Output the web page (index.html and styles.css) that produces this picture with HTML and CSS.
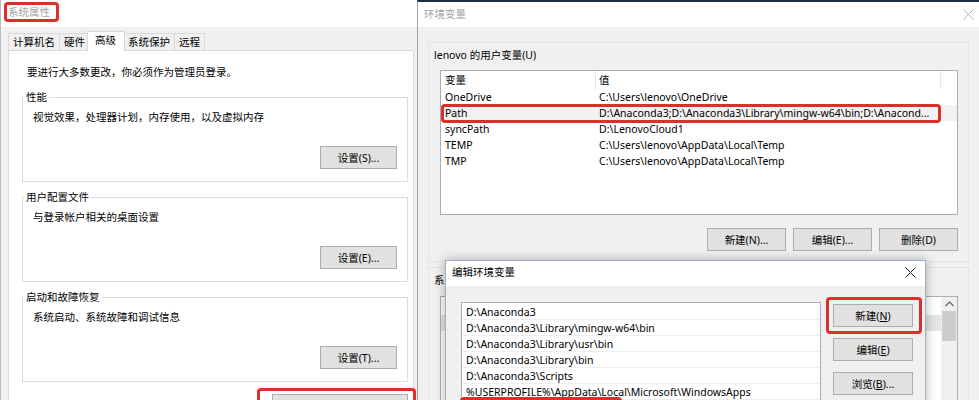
FILE: index.html
```html
<!DOCTYPE html>
<html lang="zh-CN">
<head>
    <meta charset="UTF-8">
    <meta name="viewport" content="width=device-width, initial-scale=1.0">
    <title>系统属性 - 环境变量</title>
    <link rel="stylesheet" href="styles.css">
</head>
<body>
    <div class="desktop">

        <!-- 系统属性 -->
        <div class="window sysprop">
            <div class="titlebar"><span class="title">系统属性</span></div>
            <div class="tabs">
                <div class="tab">计算机名</div>
                <div class="tab">硬件</div>
                <div class="tab active">高级</div>
                <div class="tab">系统保护</div>
                <div class="tab">远程</div>
            </div>
            <div class="tab-panel">
                <p class="intro">要进行大多数更改，你必须作为管理员登录。</p>
                <div class="group">
                    <div class="group-label">性能</div>
                    <p class="group-text">视觉效果，处理器计划，内存使用，以及虚拟内存</p>
                    <div class="group-actions"><button class="btn">设置(S)...</button></div>
                </div>
                <div class="group">
                    <div class="group-label">用户配置文件</div>
                    <p class="group-text">与登录帐户相关的桌面设置</p>
                    <div class="group-actions"><button class="btn">设置(E)...</button></div>
                </div>
                <div class="group">
                    <div class="group-label">启动和故障恢复</div>
                    <p class="group-text">系统启动、系统故障和调试信息</p>
                    <div class="group-actions"><button class="btn">设置(T)...</button></div>
                </div>
                <!-- 环境变量按钮只露出上沿 -->
                <div class="panel-actions"><button class="btn wide"></button></div>
            </div>
            <div class="mark mark-title"></div>
            <div class="mark mark-envbtn"></div>
        </div>

        <!-- 环境变量 -->
        <div class="window envvars">
            <div class="titlebar">
                <span class="title">环境变量</span>
                <span class="close inactive">
                    <svg width="11" height="11" viewBox="0 0 11 11"><path d="M0.5 0.5L10.5 10.5M10.5 0.5L0.5 10.5" stroke="currentColor" stroke-width="1"/></svg>
                </span>
            </div>
            <div class="env-body">
                <div class="env-group">
                    <div class="env-label">lenovo 的用户变量(U)</div>
                    <div class="listview user">
                        <div class="lv-head"><span class="col-name">变量</span><span class="col-value">值</span></div>
                        <div class="lv-row"><span class="col-name">OneDrive</span><span class="col-value">C:\Users\lenovo\OneDrive</span></div>
                        <div class="lv-row selected"><span class="col-name">Path</span><span class="col-value">D:\Anaconda3;D:\Anaconda3\Library\mingw-w64\bin;D:\Anacond...</span></div>
                        <div class="lv-row"><span class="col-name">syncPath</span><span class="col-value">D:\LenovoCloud1</span></div>
                        <div class="lv-row"><span class="col-name">TEMP</span><span class="col-value">C:\Users\lenovo\AppData\Local\Temp</span></div>
                        <div class="lv-row"><span class="col-name">TMP</span><span class="col-value">C:\Users\lenovo\AppData\Local\Temp</span></div>
                    </div>
                    <div class="env-actions">
                        <button class="btn">新建(N)...</button>
                        <button class="btn">编辑(E)...</button>
                        <button class="btn">删除(D)</button>
                    </div>
                </div>
                <div class="env-group">
                    <div class="env-label">系</div>
                    <!-- 系统变量列表被编辑对话框挡住，只剩右侧一条 -->
                    <div class="listview sys">
                        <div class="lv-content">
                            <div class="lv-head"></div>
                            <div class="lv-row selected"></div>
                            <div class="lv-row"></div>
                            <div class="lv-row"></div>
                            <div class="lv-row"></div>
                            <div class="lv-row"></div>
                        </div>
                        <div class="scrollbar">
                            <div class="sb-up">
                                <svg width="9" height="6" viewBox="0 0 9 6"><path d="M0.5 5L4.5 1L8.5 5" fill="none" stroke="#606060" stroke-width="1.2"/></svg>
                            </div>
                            <div class="sb-thumb"></div>
                        </div>
                    </div>
                </div>
            </div>
            <div class="mark mark-path"></div>
        </div>

        <!-- 编辑环境变量 -->
        <div class="window editdlg">
            <div class="titlebar">
                <span class="title">编辑环境变量</span>
                <span class="close">
                    <svg width="11" height="11" viewBox="0 0 11 11"><path d="M0.5 0.5L10.5 10.5M10.5 0.5L0.5 10.5" stroke="currentColor" stroke-width="1"/></svg>
                </span>
            </div>
            <div class="edit-body">
                <div class="listbox">
                    <div class="lb-item">D:\Anaconda3</div>
                    <div class="lb-item">D:\Anaconda3\Library\mingw-w64\bin</div>
                    <div class="lb-item">D:\Anaconda3\Library\usr\bin</div>
                    <div class="lb-item">D:\Anaconda3\Library\bin</div>
                    <div class="lb-item">D:\Anaconda3\Scripts</div>
                    <div class="lb-item">%USERPROFILE%\AppData\Local\Microsoft\WindowsApps</div>
                </div>
                <div class="edit-actions">
                    <button class="btn">新建(<u>N</u>)</button>
                    <button class="btn">编辑(<u>E</u>)</button>
                    <button class="btn">浏览(<u>B</u>)...</button>
                </div>
            </div>
            <div class="mark mark-new"></div>
            <div class="mark mark-item"></div>
        </div>

    </div>
</body>
</html>
```

FILE: styles.css
```css
body {
    margin: 0;
    font-family: "Noto Sans", "Noto Sans CJK SC", sans-serif;
    font-size: 10.5px;
    color: #000;
    background: #f0f0f0;
}
p {
    margin: 0;
}
.desktop {
    position: relative;
    width: 979px;
    height: 400px;
    overflow: hidden;
    background: #f0f0f0;
}
.window {
    position: absolute;
    top: 0;
    box-sizing: border-box;
    background: #f0f0f0;
}
.titlebar {
    display: flex;
    justify-content: space-between;
    align-items: flex-start;
    background: #fff;
    box-sizing: border-box;
}
.title {
    line-height: 14px;
    color: #a3a3a3;
}
.close {
    display: flex;
    color: #222;
}
.close.inactive {
    color: #b0b0b0;
}
.btn {
    height: 23px;
    padding: 0;
    background: #e1e1e1;
    border: 1px solid #adadad;
    font: inherit;
    color: #000;
    line-height: 20px;
}
.btn u {
    text-decoration: underline;
    text-underline-offset: 1px;
}
.mark {
    position: absolute;
    border: 3px solid #d9302a;
    border-radius: 4px;
    box-sizing: border-box;
}

/* 系统属性 */
.sysprop {
    left: 0;
    width: 418px;
    height: 430px;
    border-left: 1px solid #bcbcbc;
}
.sysprop .titlebar {
    height: 27px;
    padding: 5px 0 0 7px;
}
.tabs {
    display: flex;
    align-items: flex-end;
    padding: 4px 0 0 7px;
}
.tab {
    height: 17px;
    line-height: 16px;
    padding: 0 4px;
    margin-right: -1px;
    border: 1px solid #d9d9d9;
    border-bottom: none;
    box-sizing: border-box;
    background: #f0f0f0;
}
.tab.active {
    position: relative;
    z-index: 1;
    height: 20px;
    margin: 0 -2px -1px -2px;
    padding: 0 8px 2px 7px;
    background: #fff;
}
.tab-panel {
    width: 406px;
    height: 390px;
    margin-left: 7px;
    padding: 0 5px 0 13px;
    box-sizing: border-box;
    background: #fff;
    border: 1px solid #d9d9d9;
}
.intro {
    margin: 13px 0 0 5px;
    line-height: 16px;
}
.group {
    margin-top: 17px;
    padding: 0 10px 12px 10px;
    border: 1px solid #dcdcdc;
}
.group + .group {
    margin-top: 15px;
}
.group-label {
    display: table;
    margin: -8px 0 0 -9px;
    padding: 0 2px;
    line-height: 14px;
    background: #fff;
}
.group-text {
    margin-top: 5px;
    line-height: 16px;
}
.group-actions,
.panel-actions,
.env-actions {
    display: flex;
    justify-content: flex-end;
}
.group-actions {
    margin-top: 21px;
}
.group-actions .btn {
    width: 77px;
}
.panel-actions {
    margin-top: 12px;
}
.btn.wide {
    width: 136px;
}
.mark-title {
    left: 3px;
    top: 2px;
    width: 55px;
    height: 20px;
}
.mark-envbtn {
    left: 256px;
    top: 388px;
    width: 159px;
    height: 30px;
}

/* 环境变量 */
.envvars {
    left: 417px;
    width: 574px;
    height: 430px;
    border-left: 1px solid #a5a5a5;
    border-top: 2px solid #1f2d42;
}
.envvars .titlebar {
    height: 25px;
    padding: 5px 0 0 6px;
}
.envvars .close {
    width: 46px;
    justify-content: center;
    margin-top: 2px;
}
.env-body {
    padding: 15px 0 0 10px;
}
.env-group {
    width: 541px;
    padding: 4px 10px 10px 11px;
    box-sizing: border-box;
    border: 1px solid #e3e3e3;
}
.env-group + .env-group {
    margin-top: 5px;
}
.env-label {
    margin-left: -6px;
    line-height: 16px;
}
.listview {
    width: 518px;
    height: 145px;
    margin-top: 7px;
    box-sizing: border-box;
    background: #fff;
    border: 1px solid #abadb3;
    overflow: hidden;
}
.listview.sys {
    display: flex;
    height: 160px;
    margin-top: 8px;
}
.lv-content {
    flex: 1;
}
.lv-head,
.lv-row {
    display: flex;
    white-space: nowrap;
}
.lv-head {
    height: 18px;
    line-height: 18px;
}
.lv-row {
    height: 16px;
    line-height: 16px;
}
.lv-row.selected {
    background: #f2f2f2;
}
.listview.sys .lv-row.selected {
    background: #e5e5e5;
}
.col-name {
    width: 155px;
    padding-left: 4px;
    box-sizing: border-box;
    flex: none;
}
.col-value {
    width: 345px;
    padding-left: 3px;
    box-sizing: border-box;
    flex: none;
    overflow: hidden;
}
.lv-head .col-name,
.lv-head .col-value {
    border-right: 1px solid #e5e5e5;
}
.env-actions {
    gap: 7px;
    margin-top: 13px;
}
.env-actions .btn {
    width: 79px;
}
.scrollbar {
    width: 16px;
    background: #f0f0f0;
}
.sb-up {
    display: flex;
    justify-content: center;
    align-items: center;
    height: 14px;
}
.sb-thumb {
    height: 30px;
    margin: 0 1px;
    background: #cdcdcd;
}
.mark-path {
    left: 23px;
    top: 102px;
    width: 500px;
    height: 19px;
}

/* 编辑环境变量 */
.editdlg {
    left: 445px;
    top: 260px;
    width: 481px;
    height: 170px;
    border: 1px solid #9fb0c6;
    box-shadow: 0 0 10px rgba(0, 0, 0, 0.3);
}
.editdlg .titlebar {
    height: 25px;
    padding: 4px 0 0 6px;
}
.editdlg .title {
    color: #000;
}
.editdlg .close {
    margin: 2px 9px 0 0;
}
.edit-body {
    display: flex;
    align-items: flex-start;
    padding: 16px 0 0 15px;
}
.listbox {
    width: 360px;
    height: 130px;
    padding-top: 1px;
    box-sizing: border-box;
    background: #fff;
    border: 1px solid #abadb3;
}
.lb-item {
    height: 16px;
    line-height: 16px;
    padding-left: 4px;
    box-shadow: inset 0 -1px #eeeeee;
    white-space: nowrap;
}
.edit-actions {
    display: flex;
    flex-direction: column;
    gap: 11px;
    margin: 2px 0 0 12px;
}
.edit-actions .btn {
    width: 80px;
}
.mark-new {
    left: 380px;
    top: 36px;
    width: 96px;
    height: 37px;
}
.mark-item {
    left: 14px;
    top: 136px;
    width: 162px;
    height: 30px;
}
```
